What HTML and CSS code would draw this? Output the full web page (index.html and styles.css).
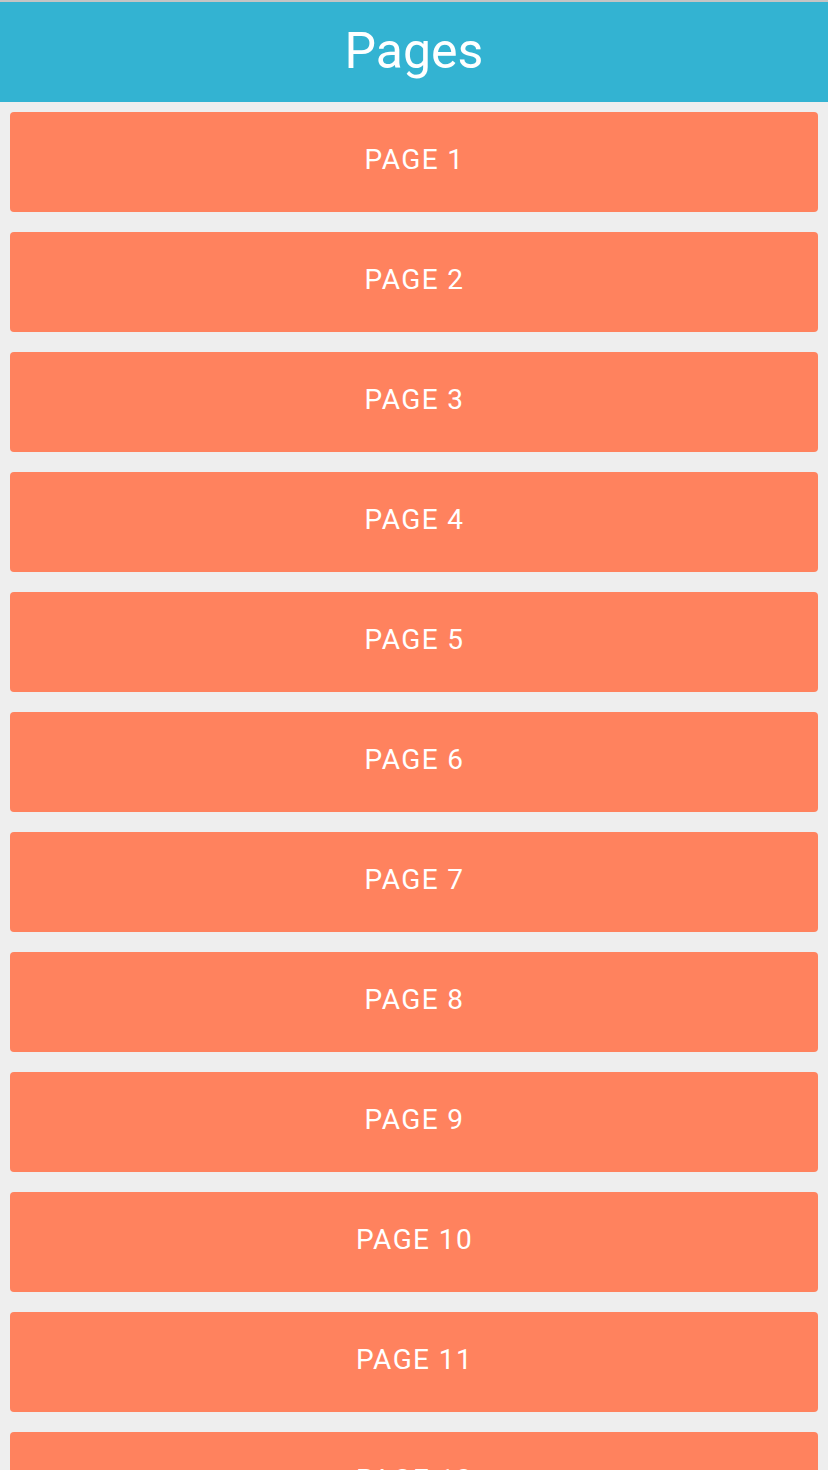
FILE: index.html
```html
<!DOCTYPE html>
<html>
<head>
<meta charset="utf-8">
<link rel="stylesheet" href="styles.css">
</head>
<body>
<div class="topline"></div>
<header class="header"><h1 class="title">Pages</h1></header>
<main class="list">
  <button class="page-btn">PAGE 1</button>
  <button class="page-btn">PAGE 2</button>
  <button class="page-btn">PAGE 3</button>
  <button class="page-btn">PAGE 4</button>
  <button class="page-btn">PAGE 5</button>
  <button class="page-btn">PAGE 6</button>
  <button class="page-btn">PAGE 7</button>
  <button class="page-btn">PAGE 8</button>
  <button class="page-btn">PAGE 9</button>
  <button class="page-btn">PAGE 10</button>
  <button class="page-btn">PAGE 11</button>
  <button class="page-btn">PAGE 12</button>
</main>
</body>
</html>
```
FILE: styles.css
```css
html, body {
  margin: 0;
  padding: 0;
  background: #eeeeee;
  font-family: Roboto, "Noto Sans", sans-serif;
  height: 1470px;
  overflow: hidden;
}
.topline {
  height: 2px;
  background: #c4c4c4;
}
.header {
  height: 100px;
  background: #33b3d2;
  display: flex;
  align-items: center;
  justify-content: center;
}
.title {
  margin: 0;
  color: #ffffff;
  font-weight: 400;
  font-size: 50px;
  line-height: 1;
  padding-bottom: 2px;
}
.list {
  display: flex;
  flex-direction: column;
  gap: 20px;
  padding: 10px 10px 0 10px;
}
.page-btn {
  height: 100px;
  width: 100%;
  border: none;
  border-radius: 4px;
  background: #ff825e;
  color: #ffffff;
  font-family: Roboto, "Noto Sans", sans-serif;
  font-size: 28px;
  font-weight: 400;
  letter-spacing: 1.4px;
  padding: 0 0 6px 1px;
  display: flex;
  align-items: center;
  justify-content: center;
  flex-shrink: 0;
}
```
